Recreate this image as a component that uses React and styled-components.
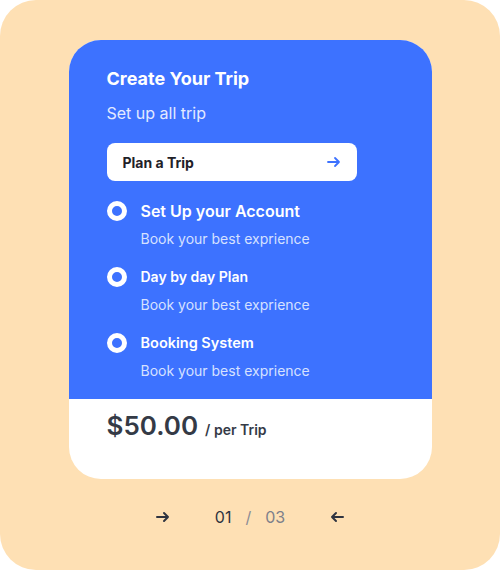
import React from "react";
import styled, { createGlobalStyle } from "styled-components";

const Global = createGlobalStyle`
  html, body { margin: 0; padding: 0; background: #ffffff; }
  body { font-family: Inter, "Noto Sans", sans-serif; -webkit-font-smoothing: antialiased; }
  * { box-sizing: border-box; }
`;

const Frame = styled.div`
  width: 500px;
  height: 570px;
  background: #fee0b4;
  border-radius: 36px;
  display: flex;
  flex-direction: column;
  align-items: center;
  padding-top: 40px;
`;

const Card = styled.div`
  width: 363px;
  border-radius: 32px;
  overflow: hidden;
  background: #ffffff;
  display: flex;
  flex-direction: column;
`;

const Top = styled.div`
  background: #3d72ff;
  padding: 28px 38px 18px;
  display: flex;
  flex-direction: column;
`;

const Title = styled.h1`
  margin: 0;
  font-size: 18px;
  line-height: 22px;
  font-weight: 700;
  color: #ffffff;
`;

const Subtitle = styled.p`
  margin: 13px 0 0;
  font-size: 16px;
  line-height: 20px;
  font-weight: 400;
  color: #e3eaff;
`;

const PlanButton = styled.button`
  margin-top: 20px;
  width: 250px;
  height: 38px;
  border: none;
  border-radius: 8px;
  background: #ffffff;
  display: flex;
  align-items: center;
  justify-content: space-between;
  padding: 0 16px;
  font-family: inherit;
  font-size: 14px;
  font-weight: 700;
  color: #1f2128;
  cursor: pointer;
`;

const Steps = styled.ul`
  list-style: none;
  margin: 20px 0 0;
  padding: 0;
  display: flex;
  flex-direction: column;
  gap: 18.5px;
`;

const Step = styled.li`
  display: grid;
  grid-template-columns: 20px 1fr;
  column-gap: 14px;
  row-gap: 7.5px;
  align-items: center;
`;

const Radio = styled.span`
  width: 20px;
  height: 20px;
  border-radius: 50%;
  border: 5.5px solid #ffffff;
  background: #3d72ff;
`;

const StepTitle = styled.span`
  font-size: ${(p) => p.$size}px;
  line-height: 20px;
  font-weight: 600;
  color: #ffffff;
`;

const StepText = styled.span`
  grid-column: 2;
  font-size: 14px;
  line-height: 20px;
  font-weight: 400;
  color: #d6e1ff;
`;

const Bottom = styled.div`
  padding: 10px 38px 36px;
  display: flex;
  align-items: baseline;
  gap: 7px;
  color: #343a46;
`;

const Price = styled.span`
  font-size: 26px;
  line-height: 34px;
  font-weight: 600;
`;

const Per = styled.span`
  font-size: 14px;
  font-weight: 600;
`;

const Pager = styled.div`
  margin-top: 28px;
  display: flex;
  align-items: center;
  gap: 45px;
  font-size: 16px;
  line-height: 20px;
`;

const ArrowBtn = styled.span`
  color: #2f3440;
  display: flex;
  align-items: center;
`;

const Counter = styled.div`
  display: flex;
  align-items: center;
  gap: 14px;
`;

const Num = styled.span`
  color: ${(p) => (p.$muted ? "#7d7f8a" : "#2f3440")};
  font-weight: 400;
`;

const Slash = styled.span`
  color: #8a8c96;
`;

const Arrow = ({ dir = "right", color, size = 14, stroke = 2 }) => (
  <svg width={size} height={size} viewBox="0 0 14 14" fill="none">
    {dir === "right" ? (
      <path d="M1 7h11M8 3l4 4-4 4" stroke={color} strokeWidth={stroke} strokeLinecap="round" strokeLinejoin="round" />
    ) : (
      <path d="M13 7H2M6 3L2 7l4 4" stroke={color} strokeWidth={stroke} strokeLinecap="round" strokeLinejoin="round" />
    )}
  </svg>
);

const steps = [
  { title: "Set Up your Account", size: 16 },
  { title: "Day by day Plan", size: 14 },
  { title: "Booking System", size: 14.5 },
];

export default function App() {
  return (
    <>
      <Global />
      <Frame>
        <Card>
          <Top>
            <Title>Create Your Trip</Title>
            <Subtitle>Set up all trip</Subtitle>
            <PlanButton>
              Plan a Trip
              <Arrow dir="right" color="#3d72ff" size={14} stroke={1.8} />
            </PlanButton>
            <Steps>
              {steps.map((s) => (
                <Step key={s.title}>
                  <Radio />
                  <StepTitle $size={s.size}>{s.title}</StepTitle>
                  <StepText>Book your best exprience</StepText>
                </Step>
              ))}
            </Steps>
          </Top>
          <Bottom>
            <Price>$50.00</Price>
            <Per>/ per Trip</Per>
          </Bottom>
        </Card>
        <Pager>
          <ArrowBtn>
            <Arrow dir="right" color="#2f3440" size={14} stroke={2} />
          </ArrowBtn>
          <Counter>
            <Num>01</Num>
            <Slash>/</Slash>
            <Num $muted>03</Num>
          </Counter>
          <ArrowBtn>
            <Arrow dir="left" color="#2f3440" size={14} stroke={2} />
          </ArrowBtn>
        </Pager>
      </Frame>
    </>
  );
}
